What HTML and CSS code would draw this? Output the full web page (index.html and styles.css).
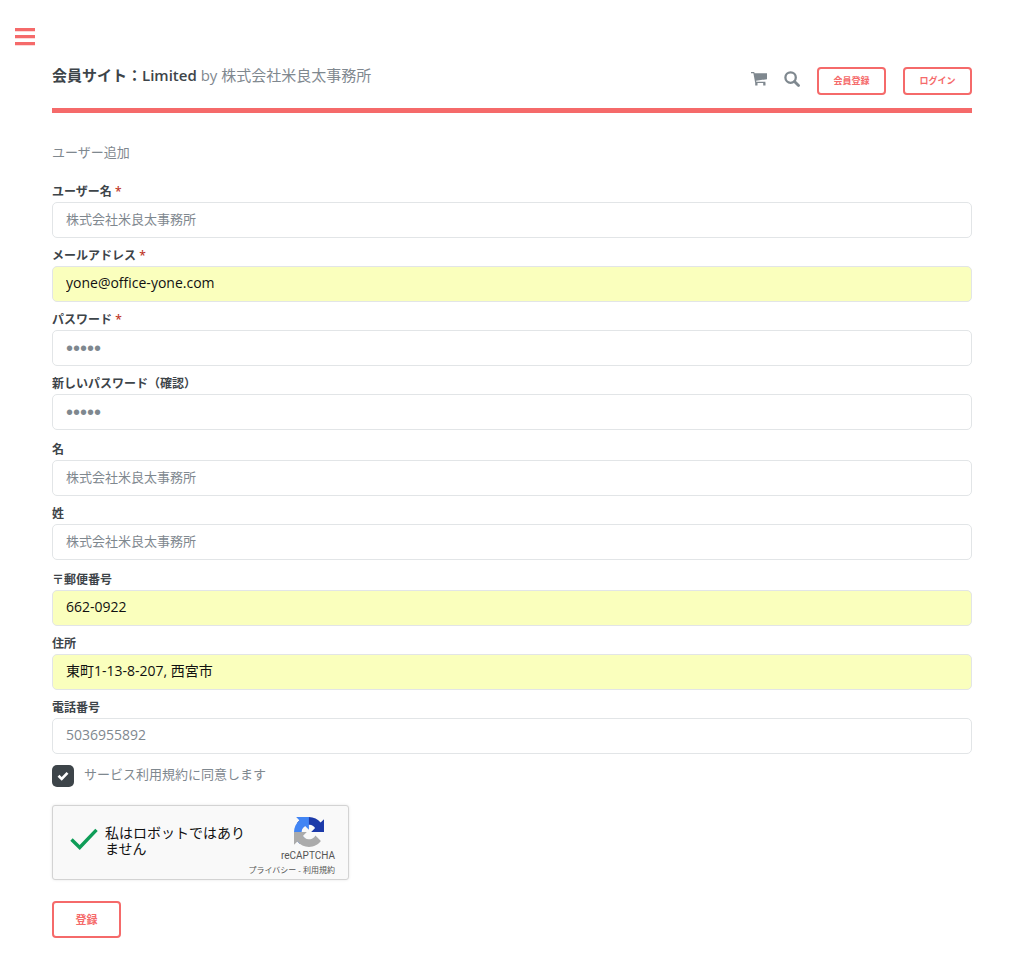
FILE: index.html
```
<!DOCTYPE html>
<html lang="ja">

<head>
    <meta charset="UTF-8">
    <meta name="viewport" content="width=device-width, initial-scale=1.0">
    <title>会員サイト：Limited</title>
    <link rel="stylesheet" href="styles.css">
</head>

<body>
    <button type="button" class="menu-toggle" aria-label="メニュー">
        <svg width="20" height="18" viewBox="0 0 20 18" aria-hidden="true">
            <path fill="currentColor" d="M0 0h20v3.2H0zM0 7h20v3.2H0zM0 14h20v3.2H0z"/>
        </svg>
    </button>

    <div class="main">
        <header class="header">
            <a href="#" class="logo"><strong>会員サイト：Limited</strong> by 株式会社米良太事務所</a>
            <nav class="icons">
                <a href="#" class="icon" aria-label="カート">
                    <svg width="16" height="14" viewBox="0 0 16 14" aria-hidden="true">
                        <path fill="currentColor" d="M0 0h3.2l.4 1.2H16v6L5.1 8.7l.2 1.1H14.4V11H4.2L2.4 1.3H0zM4.2 11h2.3v2.6H4.2zM12.2 11h2.3v2.6h-2.3z"/>
                    </svg>
                </a>
                <a href="#" class="icon" aria-label="検索">
                    <svg width="16" height="16" viewBox="0 0 16 16" aria-hidden="true">
                        <circle cx="6.6" cy="6.6" r="5.2" fill="none" stroke="currentColor" stroke-width="2.3"/>
                        <path d="M10.5 10.5l4 4" stroke="currentColor" stroke-width="2.8" stroke-linecap="round"/>
                    </svg>
                </a>
                <button type="button" class="button small">会員登録</button>
                <button type="button" class="button small">ログイン</button>
            </nav>
        </header>

        <p class="lead">ユーザー追加</p>

        <form class="form" autocomplete="off">
            <div class="group">
                <div class="field">
                    <label for="username">ユーザー名 <span class="required">*</span></label>
                    <input type="text" id="username" class="kanji" value="株式会社米良太事務所">
                </div>
                <div class="field">
                    <label for="email">メールアドレス <span class="required">*</span></label>
                    <input type="email" id="email" class="filled" value="yone@office-yone.com">
                </div>
                <div class="field">
                    <label for="password">パスワード <span class="required">*</span></label>
                    <input type="password" id="password" value="abcde">
                </div>
                <div class="field">
                    <label for="confirm">新しいパスワード（確認）</label>
                    <input type="password" id="confirm" value="abcde">
                </div>
            </div>

            <div class="group">
                <div class="field">
                    <label for="first-name">名</label>
                    <input type="text" id="first-name" class="kanji" value="株式会社米良太事務所">
                </div>
                <div class="field">
                    <label for="last-name">姓</label>
                    <input type="text" id="last-name" class="kanji" value="株式会社米良太事務所">
                </div>
            </div>

            <div class="group">
                <div class="field">
                    <label for="zip">〒郵便番号</label>
                    <input type="text" id="zip" class="filled" value="662-0922">
                </div>
                <div class="field">
                    <label for="address">住所</label>
                    <input type="text" id="address" class="filled" value="東町1-13-8-207, 西宮市">
                </div>
                <div class="field">
                    <label for="tel">電話番号</label>
                    <input type="tel" id="tel" value="5036955892">
                </div>
            </div>

            <div class="agree">
                <span class="checkbox">
                    <input type="checkbox" id="agree" checked>
                    <svg width="12" height="10" viewBox="0 0 12 10" aria-hidden="true">
                        <path d="M1.5 4.8l3.2 3.1 5.8-6" fill="none" stroke="#fff" stroke-width="2.7"/>
                    </svg>
                </span>
                <label for="agree">サービス利用規約に同意します</label>
            </div>

            <div class="recaptcha">
                <svg class="tick" width="28" height="22" viewBox="0 0 28 22" aria-hidden="true">
                    <path d="M1.5 11.5l8.2 8L26.5 1.8" fill="none" stroke="#0f9d58" stroke-width="3.4"/>
                </svg>
                <p class="robot">私はロボットではありません</p>
                <div class="brand">
                    <svg width="30" height="30" viewBox="0 0 64 64" aria-hidden="true">
                        <path fill="#1c3aa9" d="M64 31.955l-.033-1.37V4.687l-7.16 7.16C50.948 4.674 42.033.093 32.05.093c-10.4 0-19.622 4.96-25.458 12.64l11.736 11.86a15.55 15.55 0 0 1 4.754-5.334c2.05-1.6 4.952-2.906 8.968-2.906.485 0 .86.057 1.135.163 4.976.393 9.288 3.14 11.828 7.124l-8.307 8.307L64 31.953"/>
                        <path fill="#4285f4" d="M31.862.094l-1.37.033H4.594l7.16 7.16C4.58 13.147 0 22.06 0 32.046c0 10.39 4.96 19.62 12.64 25.456L24.5 45.768a15.55 15.55 0 0 1-5.334-4.754c-1.6-2.05-2.906-4.952-2.906-8.968 0-.485.057-.86.163-1.135.393-4.976 3.14-9.288 7.124-11.828l8.307 8.307L31.86.095"/>
                        <path fill="#ababab" d="M.001 32.045l.033 1.37v25.898l7.16-7.16c5.86 7.173 14.774 11.754 24.76 11.754 10.39 0 19.62-4.96 25.456-12.64l-11.736-11.86a15.55 15.55 0 0 1-4.754 5.334c-2.05 1.6-4.952 2.906-8.968 2.906-.485 0-.86-.057-1.135-.163-4.976-.393-9.288-3.14-11.828-7.124l8.307-8.307c-10.522.04-22.4.066-27.295-.005"/>
                    </svg>
                    <span class="brand-name">reCAPTCHA</span>
                    <span class="brand-links"><a href="#">プライバシー</a> - <a href="#">利用規約</a></span>
                </div>
            </div>

            <button type="submit" class="button">登録</button>
        </form>
    </div>
</body>

</html>
```
FILE: styles.css
```
* {
    box-sizing: border-box;
    margin: 0;
    padding: 0;
}

body {
    background: #fff;
    color: #7f888f;
    font-family: 'Open Sans', 'Noto Sans CJK JP', sans-serif;
    font-size: 13px;
    line-height: 20px;
}

a {
    color: inherit;
    text-decoration: none;
}

svg {
    display: block;
}

.menu-toggle {
    position: absolute;
    top: 28px;
    left: 15px;
    border: 0;
    background: none;
    color: #f56a6a;
    cursor: pointer;
}

.main {
    padding: 64px 52px 27px;
}

/* Header */
.header {
    display: flex;
    justify-content: space-between;
    align-items: flex-start;
    padding-bottom: 13px;
    border-bottom: 5px solid #f56a6a;
}

.logo {
    font-size: 15px;
    line-height: 22px;
}

.logo strong {
    color: #3d4449;
    font-weight: 600;
}

.icons {
    display: flex;
    align-items: center;
    gap: 17px;
    padding-top: 3px;
}

.icon {
    margin-bottom: 4px;
}

.button {
    width: 69px;
    height: 37px;
    padding-bottom: 2px;
    border: 2px solid #f56a6a;
    border-radius: 4px;
    background: #fff;
    color: #f56a6a;
    font-family: inherit;
    font-size: 11px;
    font-weight: 700;
    cursor: pointer;
}

.button.small {
    height: 28px;
    font-size: 9px;
}

.lead {
    margin: 29px 0 21px;
}

/* Form */
.form {
    display: flex;
    flex-direction: column;
    align-items: flex-start;
}

.group {
    display: grid;
    gap: 9px;
    width: 100%;
    margin-bottom: 11px;
}

.field label {
    display: block;
    margin-bottom: 2px;
    color: #3d4449;
    font-size: 12px;
    font-weight: 600;
    line-height: 17px;
}

.required {
    color: #c0392b;
}

.field input {
    display: block;
    width: 100%;
    height: 36px;
    padding: 0 13px 4px;
    border: 1px solid #e2e5e7;
    border-radius: 5px;
    background: #fff;
    color: #7f888f;
    font-family: inherit;
    font-size: 14px;
}

.field input.kanji {
    font-size: 13px;
}

.field input.filled {
    background: #faffbd;
    color: #111;
}

/* bigger dots */
.field input[type="password"] {
    padding-bottom: 0;
    font-family: 'Liberation Sans', sans-serif;
    font-size: 20px;
}

.agree {
    display: flex;
    gap: 10px;
    margin-bottom: 18px;
}

.agree label {
    line-height: 18px;
}

.checkbox {
    position: relative;
    width: 22px;
    height: 22px;
}

.checkbox input {
    display: block;
    width: 100%;
    height: 100%;
    border-radius: 5px;
    background: #3d4449;
    appearance: none;
}

.checkbox svg {
    position: absolute;
    top: 6px;
    left: 5px;
    pointer-events: none;
}

/* reCAPTCHA */
.recaptcha {
    display: flex;
    align-items: center;
    width: 297px;
    height: 75px;
    margin-bottom: 21px;
    padding: 0 13px 4px 17px;
    border: 1px solid #d3d3d3;
    border-radius: 3px;
    background: #f9f9f9;
    box-shadow: 0 0 3px rgba(0, 0, 0, 0.1);
}

.tick {
    flex: none;
    margin: 0 7px 4px 0;
}

.robot {
    flex: none;
    width: 142px;
    color: #111;
    font-size: 14px;
    line-height: 16px;
}

.brand {
    display: flex;
    flex: 1;
    flex-direction: column;
    align-items: flex-end;
    align-self: flex-start;
    padding-top: 11px;
    color: #555;
    white-space: nowrap;
}

.brand svg {
    margin-right: 11px;
}

.brand-name {
    font-family: Roboto, sans-serif;
    font-size: 10px;
    line-height: 18px;
}

.brand-links {
    font-size: 8px;
    line-height: 10px;
}
```
